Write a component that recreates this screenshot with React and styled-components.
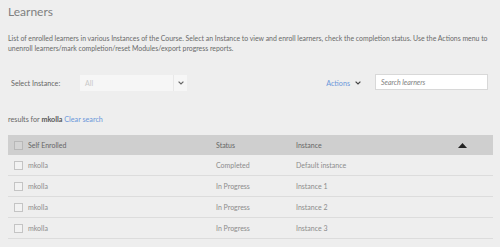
import React from 'react';
import styled, { createGlobalStyle } from 'styled-components';

const GlobalStyle = createGlobalStyle`
  html, body {
    margin: 0;
    padding: 0;
    background: #eeeeee;
    font-family: Lato, "Liberation Sans", sans-serif;
  }
`;

const Page = styled.main`
  padding: 4px 8px 0 8px;
  width: 500px;
  box-sizing: border-box;
`;

const Title = styled.h1`
  margin: 0;
  font-size: 12px;
  font-weight: 400;
  color: #808080;
  line-height: 16px;
`;

const Description = styled.p`
  margin: 13px 0 0 0;
  font-size: 6.9px;
  line-height: 10px;
  color: #6a6a6a;
`;

const Toolbar = styled.div`
  display: flex;
  align-items: center;
  margin-top: 22px;
  height: 16px;
`;

const Label = styled.span`
  font-size: 7.2px;
  color: #666;
  margin-left: 3px;
  width: 69px;
`;

const Select = styled.div`
  display: flex;
  width: 107px;
  height: 16px;
  background: #f6f6f6;
`;

const SelectValue = styled.span`
  flex: 1;
  font-size: 7px;
  color: #c8c8c8;
  padding-left: 5px;
  line-height: 16px;
`;

const SelectArrow = styled.span`
  width: 13px;
  border-left: 1px solid #e8e8e8;
  display: flex;
  align-items: center;
  justify-content: center;
`;

const Spacer = styled.div`
  flex: 1;
`;

const ActionsButton = styled.span`
  display: flex;
  align-items: center;
  gap: 5px;
  font-size: 7.2px;
  color: #6b97da;
  margin-right: 14px;
`;

const SearchInput = styled.div`
  width: 106px;
  height: 14px;
  background: #fff;
  border: 1px solid #d8d8d8;
  margin-right: 4px;
  font-size: 7px;
  font-style: italic;
  color: #808080;
  padding-left: 5px;
  line-height: 14px;
  box-sizing: content-box;
  margin-top: -2px;
`;

const Results = styled.div`
  margin-top: 24px;
  font-size: 7.2px;
  color: #666;
  b { color: #555; }
  a { color: #6b97da; text-decoration: none; }
`;

const Table = styled.div`
  margin-top: 11px;
  width: 485px;
`;

const Row = styled.div`
  display: grid;
  grid-template-columns: 20px 188px 80px 1fr;
  align-items: center;
  height: 20px;
  background: ${p => (p.$head ? '#cfcfcf' : 'transparent')};
  border-bottom: ${p => (p.$head ? 'none' : '1px solid #dcdcdc')};
  font-size: 7px;
  color: ${p => (p.$head ? '#666' : '#8c8c8c')};
`;

const Check = styled.span`
  width: 7px;
  height: 7px;
  border: 1px solid ${p => (p.$head ? '#b8b8b8' : '#c4c4c4')};
  background: ${p => (p.$head ? '#d4d4d4' : '#f2f2f2')};
  margin-left: 6px;
`;

const Cell = styled.span`
  display: flex;
  align-items: center;
  justify-content: space-between;
  padding-right: 26px;
`;

const Chevron = ({ color = '#555' }) => (
  <svg width="6" height="4" viewBox="0 0 6 4">
    <path d="M0.6 0.6 L3 3 L5.4 0.6" fill="none" stroke={color} strokeWidth="1.2" />
  </svg>
);

const SortUp = () => (
  <svg width="9" height="5" viewBox="0 0 9 5">
    <path d="M0 5 L4.5 0 L9 5 Z" fill="#222" />
  </svg>
);

const rows = [
  ['mkolla', 'Completed', 'Default instance'],
  ['mkolla', 'In Progress', 'Instance 1'],
  ['mkolla', 'In Progress', 'Instance 2'],
  ['mkolla', 'In Progress', 'Instance 3'],
];

export default function App() {
  return (
    <Page>
      <GlobalStyle />
      <Title>Learners</Title>
      <Description>
        List of enrolled learners in various Instances of the Course. Select an Instance to view and enroll learners, check the completion status. Use the Actions menu to unenroll learners/mark completion/reset Modules/export progress reports.
      </Description>
      <Toolbar>
        <Label>Select Instance:</Label>
        <Select>
          <SelectValue>All</SelectValue>
          <SelectArrow><Chevron color="#666" /></SelectArrow>
        </Select>
        <Spacer />
        <ActionsButton>Actions <Chevron color="#444" /></ActionsButton>
        <SearchInput>Search learners</SearchInput>
      </Toolbar>
      <Results>
        results for <b>mkolla</b> <a href="#">Clear search</a>
      </Results>
      <Table>
        <Row $head>
          <Check $head />
          <span>Self Enrolled</span>
          <span>Status</span>
          <Cell>Instance <SortUp /></Cell>
        </Row>
        {rows.map((r, i) => (
          <Row key={i}>
            <Check />
            <span>{r[0]}</span>
            <span>{r[1]}</span>
            <span>{r[2]}</span>
          </Row>
        ))}
      </Table>
    </Page>
  );
}
